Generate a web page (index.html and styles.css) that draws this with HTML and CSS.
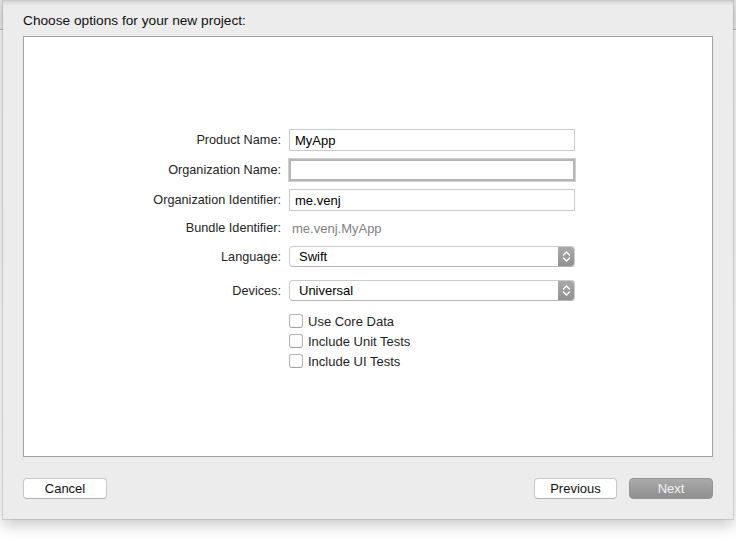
FILE: index.html
```html
<!DOCTYPE html>
<html>
<head>
<meta charset="utf-8">
<link rel="stylesheet" href="styles.css">
</head>
<body>
<div class="desk">
  <div class="sheet">
    <div class="title">Choose options for your new project:</div>
    <div class="panel">
      <div class="form">
        <div class="row row-field">
          <div class="label">Product Name:</div>
          <div class="field">MyApp</div>
        </div>
        <div class="row row-field">
          <div class="label">Organization Name:</div>
          <div class="field focused"></div>
        </div>
        <div class="row row-field">
          <div class="label">Organization Identifier:</div>
          <div class="field">me.venj</div>
        </div>
        <div class="row row-text">
          <div class="label">Bundle Identifier:</div>
          <div class="value">me.venj.MyApp</div>
        </div>
        <div class="row row-popup">
          <div class="label">Language:</div>
          <div class="popup">
            <span class="popup-text">Swift</span>
            <span class="stepper">
              <svg width="9" height="13" viewBox="0 0 9 13"><path d="M1.5 5 L4.5 2 L7.5 5 M1.5 8 L4.5 11 L7.5 8" fill="none" stroke="#fff" stroke-width="1.3" stroke-linecap="round" stroke-linejoin="round"/></svg>
            </span>
          </div>
        </div>
        <div class="row row-popup second">
          <div class="label">Devices:</div>
          <div class="popup">
            <span class="popup-text">Universal</span>
            <span class="stepper">
              <svg width="9" height="13" viewBox="0 0 9 13"><path d="M1.5 5 L4.5 2 L7.5 5 M1.5 8 L4.5 11 L7.5 8" fill="none" stroke="#fff" stroke-width="1.3" stroke-linecap="round" stroke-linejoin="round"/></svg>
            </span>
          </div>
        </div>
        <div class="checks">
          <div class="check"><span class="box"></span><span>Use Core Data</span></div>
          <div class="check"><span class="box"></span><span>Include Unit Tests</span></div>
          <div class="check"><span class="box"></span><span>Include UI Tests</span></div>
        </div>
      </div>
    </div>
    <div class="footer">
      <div class="btn btn-cancel">Cancel</div>
      <div class="spacer"></div>
      <div class="btn btn-prev">Previous</div>
      <div class="btn btn-next">Next</div>
    </div>
  </div>
</div>
</body>
</html>
```

FILE: styles.css
```css
html, body {
  margin: 0;
  padding: 0;
  background: #ffffff;
}

body {
  font-family: "Liberation Sans", Arial, sans-serif;
  font-size: 13px;
  color: #1e1e1e;
}

.desk {
  width: 736px;
  height: 548px;
  background:
    linear-gradient(#e2e2e2 0, #e9e9e9 29px, #b9b9b9 29px, #b9b9b9 30px, #f7f7f7 30px, #ffffff 100%);
  overflow: hidden;
}

.sheet {
  width: 730px;
  height: 519px;
  margin-left: 3px;
  box-sizing: border-box;
  background: linear-gradient(#c3c3c3 0, #dcdcdc 2px, #ececec 6px, #ececec 100%);
  box-shadow: 0 0 0 1px rgba(0, 0, 0, 0.10), 0 6px 14px rgba(0, 0, 0, 0.22);
  display: flex;
  flex-direction: column;
}

.title {
  padding: 13px 0 0 20px;
  line-height: 16px;
  height: 16px;
  font-size: 13.7px;
  color: #111;
}

.panel {
  margin: 7px 20px 0 20px;
  height: 421px;
  box-sizing: border-box;
  background: #ffffff;
  border: 1px solid #a4a4a4;
}

.form {
  padding-top: 92px;
  display: flex;
  flex-direction: column;
}

.row {
  display: grid;
  grid-template-columns: 257px 286px;
  column-gap: 8px;
  align-items: center;
}

.label {
  text-align: right;
  color: #242424;
  white-space: nowrap;
  font-size: 12.7px;
}

.row-field {
  height: 22px;
  margin-bottom: 8px;
}

.field {
  height: 22px;
  box-sizing: border-box;
  border: 1px solid #c9c9c9;
  background: #fff;
  padding-left: 5px;
  line-height: 21px;
  color: #000;
}

.field.focused {
  border: 2px solid #b5b5b5;
  box-shadow: 0 0 0 1px #d0d0d0;
}

.row-text {
  height: 18px;
  margin-bottom: 9px;
}

.value {
  color: #7f7f7f;
  padding-left: 3px;
}

.row-popup {
  height: 21px;
  margin-bottom: 13px;
}

.row-popup.second {
  margin-bottom: 10px;
}

.popup {
  height: 21px;
  box-sizing: border-box;
  border: 1px solid #cbcbcb;
  border-bottom-color: #b4b4b4;
  border-radius: 4px;
  background: #fff;
  display: flex;
  align-items: center;
  overflow: hidden;
}

.popup-text {
  flex: 1;
  padding-left: 9px;
  color: #000;
}

.stepper {
  width: 17px;
  height: 21px;
  margin-right: -1px;
  background: linear-gradient(#ababab, #8f8f8f);
  display: flex;
  align-items: center;
  justify-content: center;
}

.checks {
  display: flex;
  flex-direction: column;
  padding-left: 265px;
}

.check {
  height: 20px;
  display: flex;
  align-items: center;
  gap: 5px;
  color: #1e1e1e;
}

.box {
  width: 14px;
  height: 14px;
  box-sizing: border-box;
  border: 1px solid #b3b3b3;
  border-bottom-color: #a0a0a0;
  border-radius: 3px;
  background: linear-gradient(#ffffff, #f7f7f7);
}

.footer {
  display: flex;
  align-items: center;
  margin: 21px 20px 0 20px;
  gap: 12px;
}

.spacer {
  flex: 1;
}

.btn {
  height: 21px;
  box-sizing: border-box;
  border-radius: 4px;
  text-align: center;
  line-height: 19px;
  font-size: 13px;
}

.btn-cancel,
.btn-prev {
  background: #ffffff;
  border: 1px solid #c8c8c8;
  border-bottom-color: #b0b0b0;
  color: #111;
}

.btn-cancel {
  width: 84px;
}

.btn-prev {
  width: 83px;
}

.btn-next {
  width: 84px;
  background: linear-gradient(#aaaaaa, #8f8f8f);
  border: 1px solid #959595;
  color: #f4f4f4;
}
```
